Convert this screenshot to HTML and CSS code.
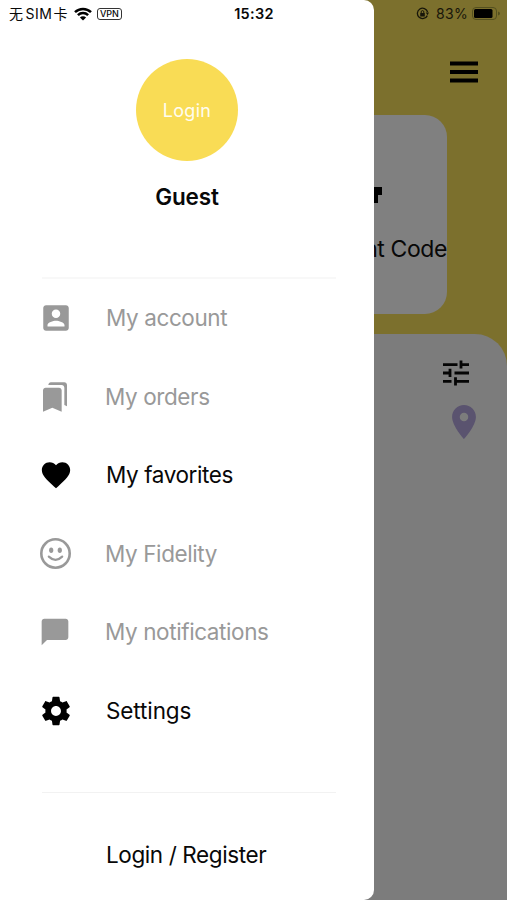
FILE: index.html
```html
<!DOCTYPE html>
<html lang="en">
<head>
<meta charset="utf-8">
<title>Menu</title>
<link rel="stylesheet" href="styles.css">
</head>
<body>
<div class="home">
  <header class="topbar">
    <svg class="burger" viewBox="0 0 28 22"><path d="M0 .5h28v4H0zM0 9h28v4H0zM0 17.5h28v4H0z"/></svg>
  </header>
  <div class="card">
    <svg class="qr" viewBox="0 0 18 18"><path d="M0 1h18v8h-4v8H6V9H0z"/></svg>
    <span>Discount Code</span>
  </div>
  <main class="sheet">
    <svg class="tune" viewBox="0 0 26 26"><path d="M0 4.6h14.5M18 .4v8.2M18 4.6h8M0 13h7M7 8.8V17M11.5 13H26M0 21.4h8.5M12.5 17.2v8.4M12.5 21.4H26"/></svg>
    <svg class="pin" viewBox="5 2 14 20"><path d="M12 2C8.130 2 5 5.130 5 9c0 5.250 7 13 7 13s7-7.750 7-13c0-3.870-3.130-7-7-7zm0 9.500a2.500 2.500 0 1 1 0-5 2.500 2.500 0 0 1 0 5z"/></svg>
  </main>
</div>

<aside class="drawer">
  <div class="profile">
    <div class="avatar"><span>Login</span></div>
    <h1>Guest</h1>
  </div>
  <nav class="menu">
    <a class="item"><span class="icon"><svg class="i34" viewBox="0 0 24 24"><path d="M3 5v14c0 1.100.890 2 2 2h14c1.100 0 2-.9 2-2V5c0-1.100-.9-2-2-2H5c-1.110 0-2 .9-2 2zm12 4c0 1.660-1.340 3-3 3s-3-1.340-3-3 1.340-3 3-3 3 1.340 3 3zm-9 8c0-2 4-3.100 6-3.100s6 1.100 6 3.100v1H6v-1z"/></svg></span><span>My account</span></a>
    <a class="item shift"><span class="icon"><svg class="i32" viewBox="0 0 24 24"><path d="M19 18l2 1V3c0-1.100-.9-2-2-2H8.990C7.890 1 7 1.900 7 3h10c1.100 0 2 .9 2 2v13zM15 5H5c-1.100 0-2 .9-2 2v16l7-3 7 3V7c0-1.100-.9-2-2-2z"/></svg></span><span>My orders</span></a>
    <a class="item active"><span class="icon"><svg class="i34" viewBox="0 0 24 24"><path d="M12 21.350l-1.450-1.320C5.400 15.360 2 12.280 2 8.500 2 5.420 4.420 3 7.500 3c1.740 0 3.410.810 4.500 2.090C13.090 3.810 14.760 3 16.500 3 19.580 3 22 5.420 22 8.500c0 3.780-3.400 6.860-8.550 11.540L12 21.350z"/></svg></span><span>My favorites</span></a>
    <a class="item shift"><span class="icon"><svg class="smile" viewBox="0 0 31 31"><circle class="ring" cx="15.500" cy="15.500" r="14.200"/><ellipse cx="11.200" cy="12.300" rx="2.100" ry="2.700"/><ellipse cx="19.800" cy="12.300" rx="2.100" ry="2.700"/><path class="mouth" d="M8.800 18.600q6.700 6.400 13.400 0"/></svg></span><span>My Fidelity</span></a>
    <a class="item shift"><span class="icon"><svg class="i32" viewBox="0 0 24 24"><path d="M20 2H4c-1.100 0-2 .9-2 2v18l4-4h14c1.100 0 2-.9 2-2V4c0-1.100-.9-2-2-2z"/></svg></span><span>My notifications</span></a>
    <a class="item active settings"><span class="icon"><svg class="i34" viewBox="0 0 24 24"><path d="M19.430 12.980c.040-.320.070-.640.070-.980s-.030-.660-.070-.980l2.110-1.650c.190-.150.240-.420.120-.640l-2-3.460c-.120-.220-.390-.300-.610-.220l-2.490 1c-.520-.4-1.080-.730-1.690-.980l-.380-2.650C14.460 2.180 14.250 2 14 2h-4c-.250 0-.460.180-.490.420l-.380 2.650c-.610.250-1.170.590-1.690.980l-2.490-1c-.230-.090-.490 0-.610.220l-2 3.460c-.130.220-.070.490.120.640l2.110 1.650c-.040.320-.070.650-.070.980s.030.660.070.980l-2.110 1.650c-.190.150-.240.420-.120.640l2 3.460c.120.220.390.300.610.220l2.490-1c.520.4 1.080.730 1.690.980l.380 2.650c.030.240.240.420.490.420h4c.250 0 .460-.180.490-.420l.380-2.650c.610-.250 1.170-.590 1.690-.980l2.490 1c.230.090.490 0 .610-.220l2-3.460c.120-.220.070-.490-.120-.640l-2.110-1.650zM12 15.500c-1.930 0-3.500-1.570-3.500-3.500s1.570-3.500 3.500-3.500 3.500 1.570 3.500 3.500-1.570 3.500-3.500 3.500z"/></svg></span><span>Settings</span></a>
  </nav>
  <a class="item active login"><span class="icon"></span><span>Login / Register</span></a>
</aside>

<div class="status">
  <div class="carrier">
    <span class="sim">无<b>SIM</b>卡</span>
    <svg class="wifi" viewBox="0 0 18 14"><path d="M1 5.200a11.500 11.500 0 0 1 16 0M3.900 8.200a7.300 7.300 0 0 1 10.200 0"/><path class="dot" d="M9 13.600L5.900 10.500a4.400 4.400 0 0 1 6.200 0z"/></svg>
    <span class="vpn">VPN</span>
  </div>
  <time>15:32</time>
  <div class="power">
    <svg class="lock" viewBox="0 0 13 13"><path class="arc" d="M11.300 8.600A5.200 5.200 0 1 1 11.600 5"/><path d="M9.800 5.500H13L11.500 8.200zM4.200 6h4.600v3.500H4.200z"/><path class="shackle" d="M5.200 6V4.900a1.300 1.300 0 0 1 2.600 0V6"/></svg>
    <span>83%</span>
    <svg class="battery" viewBox="0 0 28 13"><rect class="case" x=".5" y=".5" width="24" height="12" rx="3.500"/><rect x="2" y="2" width="18.500" height="9" rx="1.500"/><path class="cap" d="M26 4.500q2 .6 2 2t-2 2z"/></svg>
  </div>
</div>
</body>
</html>
```
FILE: styles.css
```css
* { box-sizing: border-box; }
body {
  margin: 0;
  height: 900px;
  position: relative;
  overflow: hidden;
  font-family: Inter, "Noto Sans CJK SC", sans-serif;
  color: #080808;
}
svg { display: block; flex: none; }

.home {
  height: 900px;
  display: flex;
  flex-direction: column;
  background: #7c702d;
}
.topbar { height: 115px; padding: 61px 29px 0 0; display: flex; justify-content: flex-end; }
.burger { width: 28px; height: 22px; }
.card {
  width: 387px;
  height: 199px;
  margin: 0 0 20px 60px;
  padding-top: 71px;
  border-radius: 22px;
  background: #808080;
  display: flex;
  flex-direction: column;
  align-items: flex-end;
  gap: 30px;
  font-size: 23px;
  line-height: 30px;
  letter-spacing: -.4px;
}
.qr { width: 18px; height: 18px; margin-right: 65px; }
.sheet {
  flex: 1;
  padding: 26px 31px 0 0;
  border-radius: 32px 32px 0 0;
  background: #7c7c7c;
  display: flex;
  flex-direction: column;
  align-items: flex-end;
  gap: 19px;
}
.tune { width: 26px; height: 26px; margin-right: 7px; fill: none; stroke: #050505; stroke-width: 2.8; }
.pin { width: 24px; height: 34px; fill: #5a536f; }

.drawer {
  position: absolute;
  inset: 0 auto 0 0;
  width: 373.500px;
  padding: 59px 37.500px 0 42px;
  border-radius: 0 10px 10px 0;
  background: #fff;
}
.profile { height: 218px; display: flex; flex-direction: column; align-items: center; }
.avatar {
  width: 102px;
  height: 102px;
  margin-right: 4px;
  border-radius: 50%;
  background: #f9dc55;
  color: #fffdf0;
  display: flex;
  align-items: center;
  justify-content: center;
  font-size: 18px;
  letter-spacing: .3px;
}
h1 { margin: 21px 4px 0 0; font-size: 22.500px; line-height: 30px; font-weight: 600; letter-spacing: -.1px; }
.menu {
  height: 516px;
  border-top: 2px solid #f8f8f8;
  border-bottom: 1px solid #f2f2f2;
}
.item {
  height: 78.500px;
  display: flex;
  align-items: center;
  color: #999;
  fill: #999;
  font-size: 22.500px;
  line-height: 30px;
  letter-spacing: -.4px;
  white-space: nowrap;
}
.active { color: #080808; fill: #000; }
.settings { letter-spacing: -.1px; }
.icon { width: 28px; margin-right: 36px; display: flex; justify-content: center; }
.shift .icon { width: 26px; margin-right: 37px; }
.i34 { width: 34px; height: 34px; margin: 0 -3px; }
.i32 { width: 32px; height: 32px; margin: 0 -3px; }
.smile { width: 31px; height: 31px; margin: 0 -3px; }
.ring, .mouth { fill: none; stroke: #999; stroke-width: 2.600; }
.mouth { stroke-width: 2.200; stroke-linecap: round; }
.login { margin-top: 23px; }

.status {
  position: absolute;
  inset: 0 0 auto 0;
  height: 27px;
  display: grid;
  grid-template-columns: 1fr auto 1fr;
  align-items: center;
  padding: 0 7px 0 9px;
  font-size: 14px;
  line-height: 20px;
}
.carrier, .power { display: flex; align-items: center; }
.sim { letter-spacing: .5px; }
.sim b { font-weight: 400; margin: 0 1px 0 2px; }
.wifi { width: 18px; height: 14px; margin: 0 5px 0 6px; fill: none; stroke: #000; stroke-width: 2.500; }
.wifi .dot { fill: #000; stroke: none; }
.vpn {
  width: 25px;
  height: 12px;
  border: 1px solid #333;
  border-radius: 3px;
  font-size: 9px;
  font-weight: 500;
  line-height: 10px;
  text-align: center;
}
time { font-weight: 600; font-size: 14.500px; letter-spacing: .3px; margin-right: 1px; }
.power { justify-content: flex-end; color: #18160a; }
.power span { margin: 0 4px 0 7px; letter-spacing: .3px; }
.lock { width: 13px; height: 13px; fill: #18160a; }
.arc, .shackle { fill: none; stroke: #18160a; stroke-width: 1.300; }
.shackle { stroke-width: 1; }
.battery { width: 28px; height: 13px; }
.case { fill: none; stroke: #54501f; }
.cap { fill: #54501f; }
```
